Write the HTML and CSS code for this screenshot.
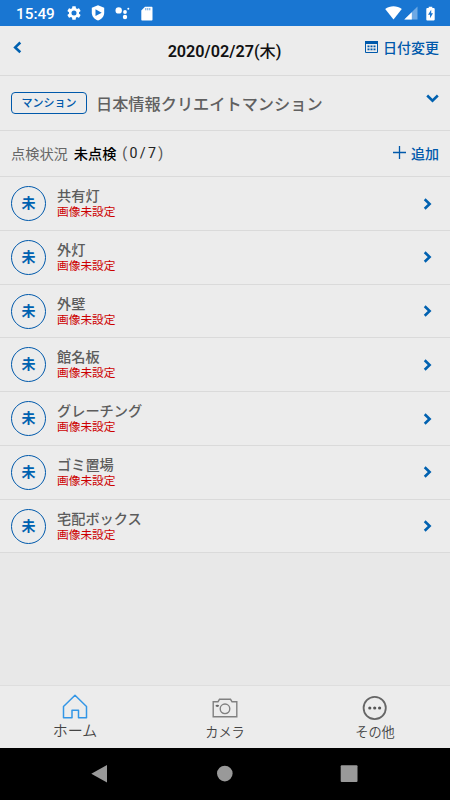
FILE: index.html
```html
<!DOCTYPE html>
<html lang="ja">
<head>
<meta charset="utf-8">
<title>点検状況</title>
<link rel="stylesheet" href="styles.css">
</head>
<body>
<div class="statusbar">
  <span class="clock">15:49</span>
  <svg class="st-gear" width="14" height="14" viewBox="2 2 20 20"><path fill="#fff" d="M19.14 12.94c.04-.3.06-.61.06-.94s-.02-.64-.07-.94l2.03-1.58c.18-.14.23-.41.12-.61l-1.92-3.32c-.12-.22-.37-.29-.59-.22l-2.39.96c-.5-.38-1.03-.7-1.62-.94l-.36-2.54c-.04-.24-.24-.41-.48-.41h-3.84c-.24 0-.43.17-.47.41l-.36 2.54c-.59.24-1.13.57-1.62.94l-2.39-.96c-.22-.08-.47 0-.59.22L2.74 8.87c-.12.21-.08.47.12.61l2.03 1.58c-.05.3-.09.63-.09.94s.02.64.07.94l-2.03 1.58c-.18.14-.23.41-.12.61l1.92 3.32c.12.22.37.29.59.22l2.39-.96c.5.38 1.03.7 1.62.94l.36 2.54c.05.24.24.41.48.41h3.84c.24 0 .44-.17.47-.41l.36-2.54c.59-.24 1.13-.56 1.62-.94l2.39.96c.22.08.47 0 .59-.22l1.92-3.32c.12-.22.07-.47-.12-.61l-2.01-1.58zM12 15.6A3.6 3.6 0 1 1 12 8.4a3.6 3.6 0 0 1 0 7.2z"/></svg>
  <svg class="st-shield" width="14" height="16" viewBox="0 0 14 16"><path fill="#fff" d="M7 .3 13.2 2.7v5c0 3.700-2.600 6.500-6.200 7.900C3.400 14.200.8 11.400.8 7.700v-5z"/><path fill="#1976d2" d="M4.500 4.300 10.700 7.700 4.500 11.100z"/></svg>
  <svg class="st-dots" width="15" height="14" viewBox="0 0 15 14"><g fill="#fff"><circle cx="3.700" cy="4.400" r="3.200"/><circle cx="10" cy="6" r="1.900"/><circle cx="13.300" cy="2.800" r="1"/><circle cx="10" cy="11" r="2.200"/></g></svg>
  <svg class="st-sd" width="12" height="15" viewBox="0 0 12 15"><path fill="#fff" d="M4 .8h6.500c.6 0 1 .4 1 1v11.700c0 .6-.4 1-1 1H1.300c-.6 0-1-.4-1-1V4.500z"/><path stroke="#1976d2" stroke-width="1" opacity=".7" d="M4.800 2v2.300M6.800 2v2.300M8.800 2v2.300"/></svg>
  <span class="grow"></span>
  <svg width="17" height="14" viewBox="0 0 17 14"><path fill="#fff" d="M.2 3C5 -.7 12-.7 16.800 3L8.500 13.400z"/></svg>
  <svg class="st-signal" width="14" height="14" viewBox="0 0 14 14"><path fill="#6ea9e4" d="M13.500.5v13H.3z"/><path fill="#fff" d="M7.800 6.200v7.300H.3z"/></svg>
  <svg class="st-battery" width="9" height="15" viewBox="0 0 9 15"><path fill="#fff" d="M2.700.7h3.600V2h1.500c.5 0 .9.400.9.900v10.700c0 .5-.4.900-.9.900H1.200c-.5 0-.9-.4-.9-.9V2.900c0-.5.4-.9.900-.9h1.500z"/><path fill="#1976d2" d="M5.200 3.800 2 8.800h2v3.400l3-5H5.200z"/></svg>
</div>

<header class="header">
  <svg class="back" width="9" height="13" viewBox="0 0 9 13"><path d="M7.300 1.500 2.200 6.400l5.100 4.900"/></svg>
  <h1 class="title">2020/02/27<span class="day">(木)</span></h1>
  <div class="change">
    <svg width="13" height="12" viewBox="0 0 13 12"><path fill="none" stroke="#0059ab" d="M.5.5h12v11H.5z"/><path fill="#0059ab" d="M0 0h13v3H0zM2.500 4.500h2v1.800h-2zM5.500 4.500h2v1.800h-2zM8.500 4.500h2v1.800h-2zM2.500 7.500h2v1.800h-2zM5.500 7.500h2v1.800h-2zM8.500 7.500h2v1.800h-2z"/></svg>
    <span>日付変更</span>
  </div>
</header>

<section class="building">
  <span class="badge">マンション</span>
  <span class="building-name">日本情報クリエイトマンション</span>
  <svg class="down" width="13" height="9" viewBox="0 0 13 9"><path d="M1.200 1.500 6.500 6.600l5.300-5.100"/></svg>
</section>

<section class="summary">
  <span class="label">点検状況</span><span class="state">未点検</span><span class="count"><i>(</i>0/7<i>)</i></span>
  <span class="grow"></span>
  <svg width="13" height="13" viewBox="0 0 13 13"><path stroke="#0059ab" stroke-width="1.300" d="M0 6.500h13M6.500 0v13"/></svg>
  <span class="add">追加</span>
</section>

<ul class="list">
  <li class="row"><span class="mark">未</span><div class="item"><p class="name">共有灯</p><p class="note">画像未設定</p></div><svg class="go" width="9" height="12" viewBox="0 0 9 12"><path d="M1.700 1.300 6.600 6l-4.900 4.700"/></svg></li>
  <li class="row"><span class="mark">未</span><div class="item"><p class="name">外灯</p><p class="note">画像未設定</p></div><svg class="go" width="9" height="12" viewBox="0 0 9 12"><path d="M1.700 1.300 6.600 6l-4.900 4.700"/></svg></li>
  <li class="row"><span class="mark">未</span><div class="item"><p class="name">外壁</p><p class="note">画像未設定</p></div><svg class="go" width="9" height="12" viewBox="0 0 9 12"><path d="M1.700 1.300 6.600 6l-4.900 4.700"/></svg></li>
  <li class="row"><span class="mark">未</span><div class="item"><p class="name">館名板</p><p class="note">画像未設定</p></div><svg class="go" width="9" height="12" viewBox="0 0 9 12"><path d="M1.700 1.300 6.600 6l-4.900 4.700"/></svg></li>
  <li class="row"><span class="mark">未</span><div class="item"><p class="name">グレーチング</p><p class="note">画像未設定</p></div><svg class="go" width="9" height="12" viewBox="0 0 9 12"><path d="M1.700 1.300 6.600 6l-4.900 4.700"/></svg></li>
  <li class="row"><span class="mark">未</span><div class="item"><p class="name">ゴミ置場</p><p class="note">画像未設定</p></div><svg class="go" width="9" height="12" viewBox="0 0 9 12"><path d="M1.700 1.300 6.600 6l-4.900 4.700"/></svg></li>
  <li class="row"><span class="mark">未</span><div class="item"><p class="name">宅配ボックス</p><p class="note">画像未設定</p></div><svg class="go" width="9" height="12" viewBox="0 0 9 12"><path d="M1.700 1.300 6.600 6l-4.900 4.700"/></svg></li>
</ul>

<nav class="tabs">
  <div class="tab tab-home">
    <svg width="26" height="26" viewBox="0 0 26 26"><path fill="none" stroke="#3396e6" stroke-width="1.500" stroke-linejoin="round" d="M13 2.300 24.500 13.500v11.300h-8v-7.500h-6.500v7.500H1.500V13.500z"/></svg>
    <span>ホーム</span>
  </div>
  <div class="tab">
    <svg width="26" height="26" viewBox="0 0 26 26"><g fill="none" stroke="#808080" stroke-width="1.400"><path d="M1.200 8.700h4.800l1.500-2.400h11l1.500 2.400h4.800v15.100H1.200z"/><circle cx="13" cy="15.800" r="4.800"/></g><ellipse cx="5.300" cy="12.800" rx="1.800" ry="1.100" fill="#666"/></svg>
    <span>カメラ</span>
  </div>
  <div class="tab">
    <svg width="26" height="27" viewBox="0 0 26 27"><circle cx="12.700" cy="15" r="11.100" fill="none" stroke="#666" stroke-width="1.800"/><g fill="#555"><circle cx="7.800" cy="15" r="1.600"/><circle cx="12.700" cy="15" r="1.600"/><circle cx="17.600" cy="15" r="1.600"/></g></svg>
    <span class="other">その他</span>
  </div>
</nav>

<div class="sysnav">
  <div><svg width="18" height="20" viewBox="0 0 18 20"><path fill="#999" d="M16 1v17.400L.3 9.700z"/></svg></div>
  <div><svg width="18" height="20" viewBox="0 0 18 20"><circle cx="8.800" cy="9.600" r="7.800" fill="#999"/></svg></div>
  <div><svg width="18" height="20" viewBox="0 0 18 20"><rect x=".7" y="1.300" width="16.800" height="16.800" rx="1" fill="#999"/></svg></div>
</div>
</body>
</html>
```
FILE: styles.css
```css
* { box-sizing: border-box; margin: 0; padding: 0; }
body {
  display: flex; flex-direction: column; width: 450px; height: 800px; overflow: hidden;
  background: #e8e8e8; color: #555;
  font-family: Roboto, "Noto Sans CJK JP", sans-serif;
}
svg { display: block; flex: none; }
span, h1, p { white-space: nowrap; }
.grow { flex: 1; }

.statusbar { display: flex; align-items: center; height: 26px; padding: 0 15px 0 16px; background: #1976d2; color: #fff; }
.clock { width: 38px; font-size: 15.3px; font-weight: 500; line-height: 26px; padding-top: 2px; }
.st-gear { margin-left: 13px; }
.st-shield { margin-left: 10px; }
.st-dots { margin-left: 10px; }
.st-sd { margin-left: 11px; }
.st-signal { margin-left: 2px; }
.st-battery { margin-left: 8px; }

.header, .building, .summary, .row { background: #ececec; border-bottom: 1px solid #dadada; }
.header { display: grid; grid-template-columns: 100px 1fr 100px; height: 50px; padding: 0 11px 0 13px; }
.back { margin-top: 15px; }
.back path, .down path, .go path { fill: none; stroke: #0061b0; stroke-width: 2.6; }
.title { padding-top: 3px; margin-left: -3px; text-align: center; color: #111; font-size: 16.2px; font-weight: 600; line-height: 46px; }
.day { font-weight: 500; }
.change { display: flex; justify-content: flex-end; align-items: center; gap: 5px; height: 42px; color: #0059ab; font-size: 14px; font-weight: 500; }

.building { display: flex; align-items: center; height: 54.7px; padding: 0 11px; }
.badge { width: 76px; height: 22px; border: 1px solid #0059ab; border-radius: 4px; color: #0059ab; font-size: 11px; font-weight: 500; line-height: 21px; text-align: center; }
.building-name { flex: 1; margin-left: 9px; font-size: 16.2px; font-weight: 500; color: #606060; }
.down { margin-top: -8px; }

.summary { display: flex; align-items: center; height: 46.5px; padding: 0 11px 1px; font-size: 14.2px; font-weight: 500; }
.label { color: #666; font-weight: 400; }
.state { margin-left: 6px; color: #000; }
.count { margin-left: 6px; color: #222; font-weight: 400; letter-spacing: 2.3px; padding-top: 1px; }
.count i { font-style: normal; color: #555; }
.add { margin-left: 5px; color: #0059ab; font-size: 14px; }

.list { list-style: none; }
.row { display: flex; align-items: center; height: 53.75px; padding: 0 17px 0 11px; }
.mark { width: 35px; height: 35px; border: 1px solid #0059ab; border-radius: 50%; color: #0061b0; font-size: 14px; font-weight: 700; line-height: 33px; text-align: center; }
.item { flex: 1; margin-left: 11px; padding-top: 1px; }
.name { font-size: 14.2px; font-weight: 500; line-height: 17px; color: #5c5c5c; }
.note { font-size: 11.7px; line-height: 15px; color: #c00; }
.go { margin-right: 1px; }

.tabs { display: grid; grid-template-columns: repeat(3, 1fr); height: 63px; margin-top: auto; padding-top: 7px; border-top: 1px solid #dedede; background: #ececec; }
.tab { display: flex; flex-direction: column; align-items: center; font-size: 13.2px; line-height: 27px; color: #555; }
.tab span { font-weight: 350; color: #444; }
.tab-home { font-size: 15px; line-height: 25px; }
.tab .other { line-height: 25px; }

.sysnav { display: flex; justify-content: space-between; height: 52px; padding: 16px 92px 0 91px; background: #000; }
```
